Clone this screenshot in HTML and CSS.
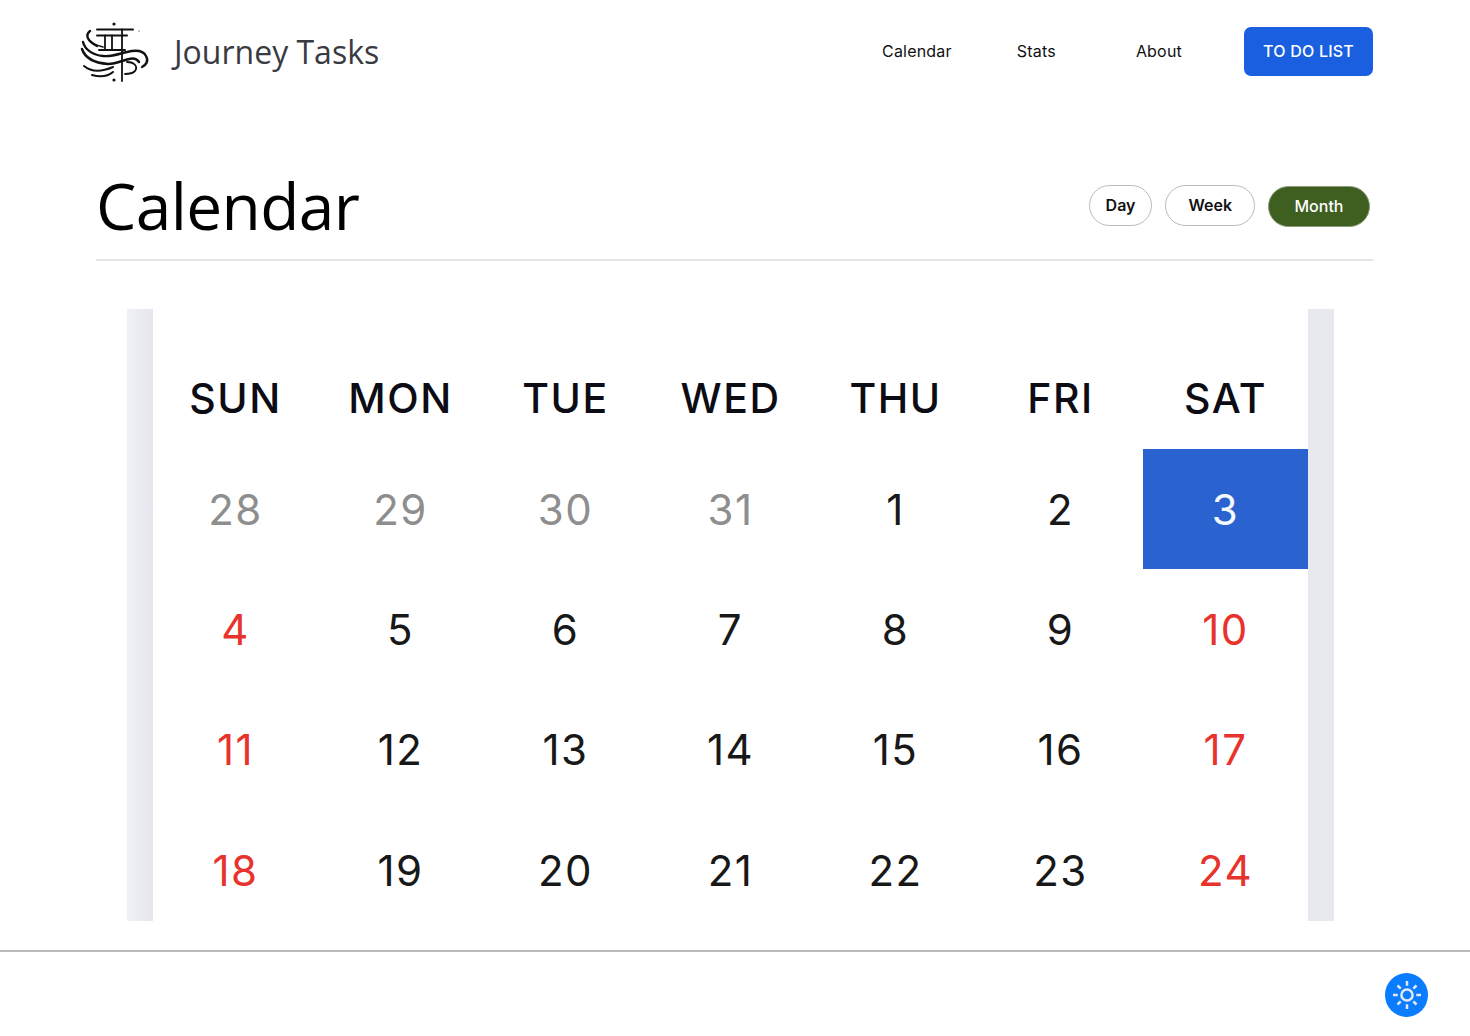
FILE: index.html
```html
<!DOCTYPE html>
<html lang="en">

<head>
    <meta charset="UTF-8">
    <meta name="viewport" content="width=device-width, initial-scale=1.0">
    <title>Journey Tasks - Calendar</title>
    <link rel="stylesheet" href="styles.css">
</head>

<body>

    <div class="nav">
        <a href="#" class="brand">
            <svg class="logo" viewBox="0 0 80 70" width="80" height="70" fill="none" stroke="#111" stroke-width="2" stroke-linecap="round">
                <circle cx="39" cy="7" r="1.6" fill="#111" stroke="none" />
                <circle cx="39" cy="63" r="1.6" fill="#111" stroke="none" />
                <circle cx="64" cy="14" r="0.6" fill="#111" stroke="none" />
                <path d="M22 12.5H58" />
                <path d="M22 18.5H52" />
                <path d="M30 18.5V33M37 18.5V33M47 12.5V64" stroke-width="1.8" />
                <path d="M24 33H50" />
                <path d="M15 14C10 18 12 24 22 29" stroke-width="2.4" />
                <path d="M13 21C15 25 20 28 28 30" stroke-width="1.6" />
                <path d="M8 25C10 33 18 38 28 39C38 40 46 36 52 35C60 33 68 33 71 39C74 44 71 48 67 50" stroke-width="2.4" />
                <path d="M7 32C10 41 20 46 33 47C42 47 48 43 54 42C58 41 62 42 64 45" stroke-width="2.4" />
                <path d="M9 49C15 54 24 56 38 50" />
                <path d="M17 58C24 60 32 60 38 55" />
                <path d="M52 45C60 45 63 50 60 54C57 57 54 57 50 57" stroke-width="1.8" />
            </svg>
            <span>Journey Tasks</span>
        </a>
        <div class="nav-links">
            <a href="#">Calendar</a>
            <a href="#">Stats</a>
            <a href="#" class="about-link">About</a>
            <a href="#" class="todo-button">TO DO LIST</a>
        </div>
    </div>

    <div class="title-row">
        <h1>Calendar</h1>
        <div class="view-buttons">
            <button>Day</button>
            <button>Week</button>
            <button class="active">Month</button>
        </div>
    </div>

    <div class="calendar">
        <div class="side side-left"></div>
        <div class="grid">
            <div class="day-name">SUN</div>
            <div class="day-name">MON</div>
            <div class="day-name">TUE</div>
            <div class="day-name">WED</div>
            <div class="day-name">THU</div>
            <div class="day-name">FRI</div>
            <div class="day-name">SAT</div>

            <div class="date muted">28</div>
            <div class="date muted">29</div>
            <div class="date muted">30</div>
            <div class="date muted">31</div>
            <div class="date">1</div>
            <div class="date">2</div>
            <div class="date today">3</div>

            <div class="date red">4</div>
            <div class="date">5</div>
            <div class="date">6</div>
            <div class="date">7</div>
            <div class="date">8</div>
            <div class="date">9</div>
            <div class="date red">10</div>

            <div class="date red">11</div>
            <div class="date">12</div>
            <div class="date">13</div>
            <div class="date">14</div>
            <div class="date">15</div>
            <div class="date">16</div>
            <div class="date red">17</div>

            <div class="date red">18</div>
            <div class="date">19</div>
            <div class="date">20</div>
            <div class="date">21</div>
            <div class="date">22</div>
            <div class="date">23</div>
            <div class="date red">24</div>
        </div>
        <div class="side"></div>
    </div>

    <div class="footer">
        <button class="theme-button" aria-label="Toggle theme">
            <svg viewBox="0 0 32 32" width="32" height="32" fill="none" stroke="#e4e8ee" stroke-width="2.5">
                <circle cx="16" cy="16" r="5.6" />
                <path d="M16 2V6.7M16 25.3V30M2 16H6.7M25.3 16H30M6.5 6.5L9.7 9.7M22.3 22.3L25.5 25.5M6.5 25.5L9.7 22.3M22.3 9.7L25.5 6.5" />
            </svg>
        </button>
    </div>

</body>

</html>
```

FILE: styles.css
```css
* {
    box-sizing: border-box;
}

body {
    font-family: "Inter", "Liberation Sans", sans-serif;
    background-color: #fff;
    color: #111;
    margin: 0;
    padding: 0;
}

a {
    text-decoration: none;
    color: inherit;
}

.nav {
    display: flex;
    justify-content: space-between;
    align-items: center;
    height: 103px;
    padding: 0 97px 0 75px;
}

.brand {
    display: flex;
    align-items: center;
    gap: 19px;
    font-family: "Open Sans", sans-serif;
    font-size: 32px;
    color: #3a3a42;
}

.nav-links {
    display: flex;
    align-items: center;
    gap: 65px;
    font-size: 16px;
    letter-spacing: 0.2px;
    line-height: 19px;
    margin-bottom: 1px;
}

.about-link {
    margin-left: 15px;
}

.todo-button {
    margin-left: -3px;
    width: 129px;
    height: 49px;
    line-height: 49px;
    text-align: center;
    background-color: #1a5fe0;
    color: #fff;
    border-radius: 7px;
    font-weight: 500;
}

.title-row {
    display: flex;
    justify-content: space-between;
    align-items: center;
    height: 158px;
    margin: 0 97px 0 96px;
    padding: 60px 3px 12px 0;
    border-bottom: 2px solid #e5e5e5;
}

h1 {
    margin: 0;
    font-family: "Open Sans", sans-serif;
    font-size: 64px;
    font-weight: 400;
    letter-spacing: -0.6px;
    color: #000;
}

.view-buttons {
    display: flex;
    gap: 13px;
    margin: 2px 0 0 0;
}

.view-buttons button {
    height: 41px;
    padding: 0 16px 2px;
    font-family: inherit;
    font-size: 16px;
    font-weight: 600;
    color: #111;
    background-color: #fff;
    border: 1px solid #bbb;
    border-radius: 21px;
}

.view-buttons button:nth-child(2) {
    padding: 0 22px 2px;
}

.view-buttons button.active {
    padding: 0 25.5px 2px;
    margin-top: 1px;
    font-weight: 500;
    color: #fff;
    background-color: #3e5f1f;
    border-color: #8a9a7a;
}

.calendar {
    display: flex;
    width: 1207px;
    height: 612px;
    margin: 48px 0 0 127px;
    overflow: hidden;
}

.side {
    flex: 0 0 26px;
    background-color: #e8e9ef;
}

.side-left {
    background: linear-gradient(to right, #f0f1f6, #e6e7ee);
}

.grid {
    flex: 1;
    display: grid;
    grid-template-columns: repeat(7, 165px);
    grid-template-rows: 140px repeat(4, 120.33px);
    text-align: center;
}

.day-name {
    padding-top: 65px;
    font-size: 41px;
    line-height: 48px;
    font-weight: 500;
    letter-spacing: 1.5px;
    color: #0c0c14;
}

.date {
    display: flex;
    align-items: center;
    justify-content: center;
    font-size: 42px;
    letter-spacing: 1.5px;
    color: #181818;
}

.date.muted {
    color: #8e8e8e;
}

.date.red {
    color: #e8322c;
}

.date.today {
    background-color: #2a62cf;
    color: #f4f7fc;
}

.footer {
    display: flex;
    justify-content: flex-end;
    margin-top: 29px;
    height: 86px;
    padding: 21px 42px 0 0;
    border-top: 2px solid #bbb;
}

.theme-button {
    display: flex;
    align-items: center;
    justify-content: center;
    width: 43px;
    height: 44px;
    padding: 0;
    border: none;
    border-radius: 50%;
    background-color: #0a7cff;
}
```
